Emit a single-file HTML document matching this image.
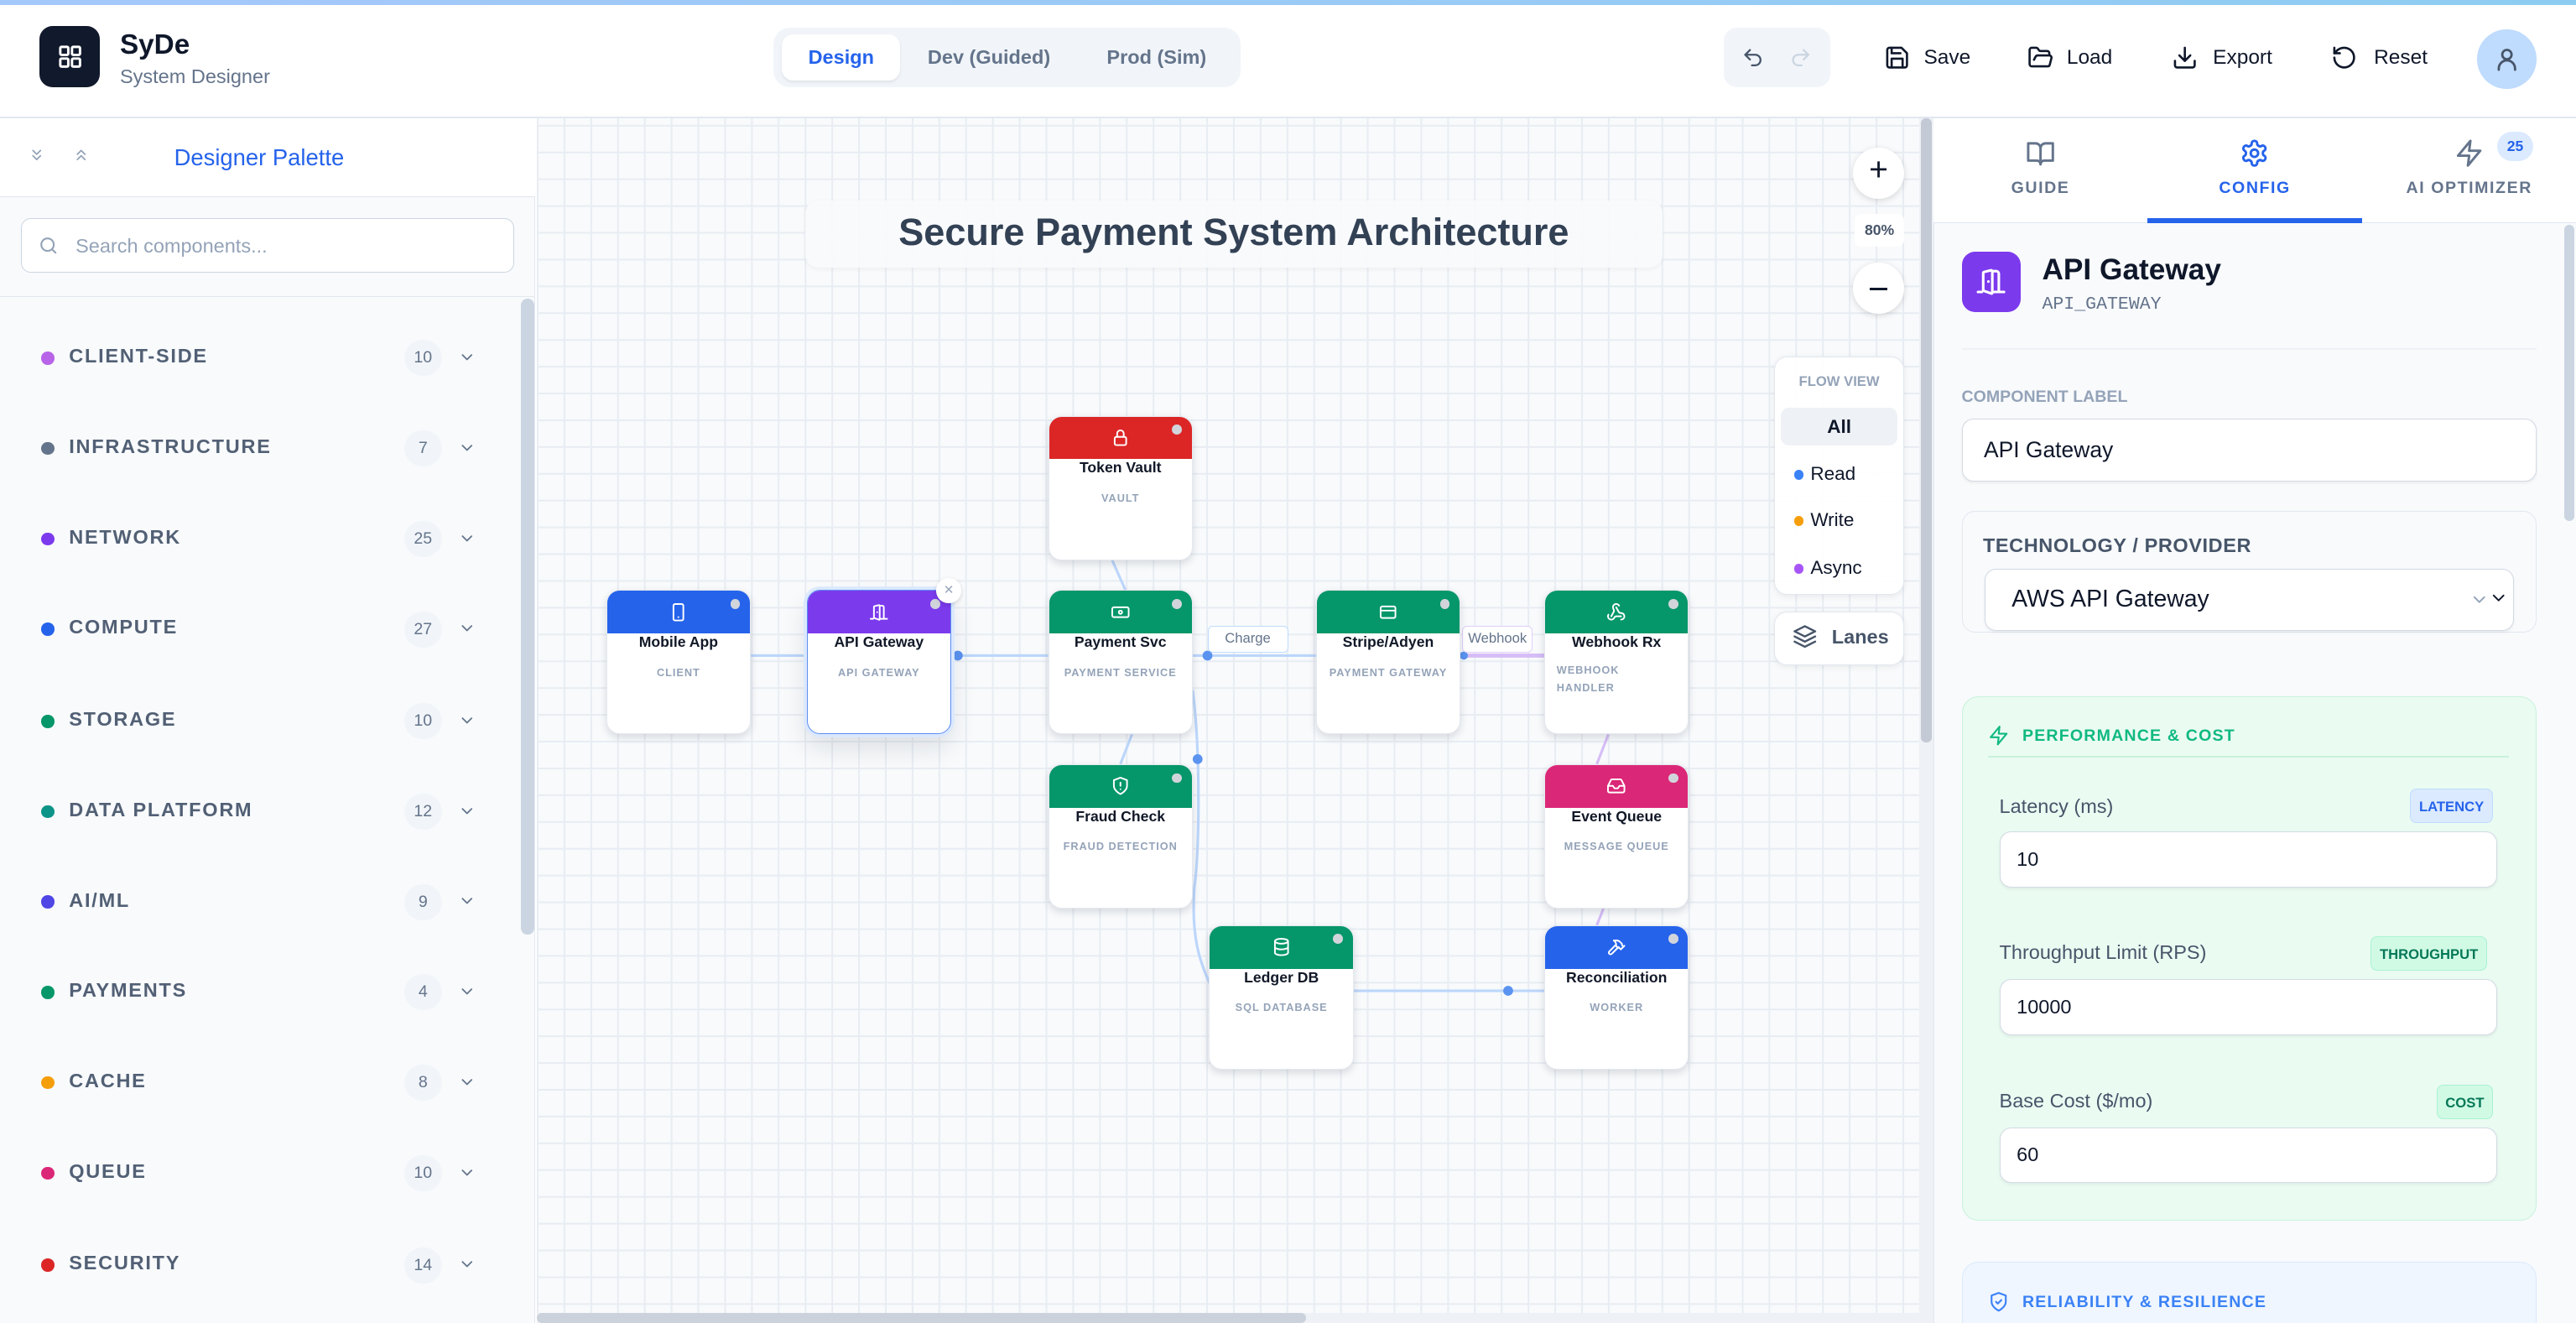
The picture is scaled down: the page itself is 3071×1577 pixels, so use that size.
<!DOCTYPE html>
<html><head><meta charset="utf-8"><style>
*{box-sizing:border-box;margin:0;padding:0}
html,body{width:3071px;height:1576px;overflow:hidden;background:#fff;font-family:"Liberation Sans","DejaVu Sans",sans-serif}
#f{position:absolute;left:0;top:0;width:1568px;height:805px;zoom:1.95855;overflow:hidden;background:#fff}
.a{position:absolute}
.t{position:absolute;white-space:nowrap}
svg.i{fill:none;stroke:currentColor;stroke-width:2;stroke-linecap:round;stroke-linejoin:round}
.cat{position:absolute;left:0;width:316px;height:30px}
.cat .d{position:absolute;left:25px;top:11px;width:8px;height:8px;border-radius:50%}
.cat .l{position:absolute;left:42px;top:7px;font-size:12px;font-weight:bold;color:#526075;letter-spacing:.9px}
.cat .n{position:absolute;left:246px;top:4px;width:23px;height:22px;border-radius:11px;background:#f1f5f9;color:#64748b;font-size:10px;text-align:center;line-height:22px}
.cat svg{position:absolute;left:279px;top:9px;width:11px;height:11px;color:#64748b}
.node{position:absolute;width:88px;height:88px;background:#fff;border-radius:8px;box-shadow:0 2px 5px rgba(15,23,42,.14);border:1px solid #e5e9ef;overflow:hidden}
.node .h{height:26px;display:flex;align-items:center;justify-content:center;color:#fff;position:relative}
.node .h svg{width:12px;height:12px}
.node .h i{position:absolute;right:6px;top:5px;width:6px;height:6px;border-radius:50%;background:#d1d5db}
.node b{display:block;text-align:center;font-size:9px;color:#111827;margin-top:0}
.node s{display:block;text-decoration:none;font-size:6.5px;color:#94a3b8;letter-spacing:.5px;text-align:center;margin-top:9px;font-weight:bold}
.lbl{position:absolute;font-size:10px;color:#94a3b8;font-weight:bold}
.inp{position:absolute;background:#fff;border:1px solid #d3dae3;border-radius:7px;box-shadow:0 1px 2px rgba(0,0,0,.06);font-size:12px;color:#0f172a;padding-left:10px;display:flex;align-items:center}
.badge{position:absolute;font-size:8.5px;font-weight:bold;border-radius:4px;padding:0 5px;height:21px;line-height:21px}
</style></head><body><div id="f">

<div class="a" style="left:0;top:0;width:1568px;height:3px;background:linear-gradient(90deg,#a5c8fa,#8ecdf2)"></div>
<div class="a" style="left:0;top:71px;width:1568px;height:1px;background:#e2e8f0"></div>
<div class="a" style="left:24px;top:16px;width:37px;height:37px;border-radius:8px;background:#111a2c;display:flex;align-items:center;justify-content:center">
<svg class="i" viewBox="0 0 24 24" style="width:18px;height:18px;color:#fff"><rect x="4" y="4" width="6.5" height="6.5" rx="1"/><rect x="13.5" y="4" width="6.5" height="6.5" rx="1"/><rect x="4" y="13.5" width="6.5" height="6.5" rx="1"/><rect x="13.5" y="13.5" width="6.5" height="6.5" rx="1"/></svg></div>
<div class="t" style="left:73px;top:18px;font-size:17px;font-weight:bold;color:#0f172a">SyDe</div>
<div class="t" style="left:73px;top:40px;font-size:12px;color:#64748b">System Designer</div>

<div class="a" style="left:471px;top:17px;width:284px;height:36px;border-radius:10px;background:#f1f5f9"></div>
<div class="a" style="left:476px;top:21px;width:72px;height:28px;border-radius:7px;background:#fff;box-shadow:0 1px 2px rgba(0,0,0,.08)"></div>
<div class="t" style="left:476px;top:28px;width:72px;text-align:center;font-size:12px;font-weight:bold;color:#2563eb">Design</div>
<div class="t" style="left:560px;top:28px;width:84px;text-align:center;font-size:12px;font-weight:bold;color:#64748b">Dev (Guided)</div>
<div class="t" style="left:664px;top:28px;width:80px;text-align:center;font-size:12px;font-weight:bold;color:#64748b">Prod (Sim)</div>

<div class="a" style="left:1049px;top:17px;width:65px;height:36px;border-radius:8px;background:#f1f5f9"></div>
<svg class="i a" viewBox="0 0 24 24" style="left:1060px;top:28px;width:14px;height:14px;color:#475569"><path d="M9 14 4 9l5-5"/><path d="M4 9h10.5a5.5 5.5 0 0 1 5.5 5.5 5.5 5.5 0 0 1-5.5 5.5H11"/></svg>
<svg class="i a" viewBox="0 0 24 24" style="left:1089px;top:28px;width:14px;height:14px;color:#cbd5e1"><path d="m15 14 5-5-5-5"/><path d="M20 9H9.5A5.5 5.5 0 0 0 4 14.5 5.5 5.5 0 0 0 9.5 20H13"/></svg>

<svg class="i a" viewBox="0 0 24 24" style="left:1147px;top:27px;width:16px;height:16px;color:#0f172a"><path d="M19 21H5a2 2 0 0 1-2-2V5a2 2 0 0 1 2-2h11l5 5v11a2 2 0 0 1-2 2z"/><path d="M17 21v-8H7v8M7 3v5h8"/></svg>
<div class="t" style="left:1171px;top:28px;font-size:12.5px;color:#0f172a">Save</div>
<svg class="i a" viewBox="0 0 24 24" style="left:1234px;top:27px;width:16px;height:16px;color:#0f172a"><path d="M6 14l1.5-2.9A2 2 0 0 1 9.24 10H20a2 2 0 0 1 1.94 2.5l-1.54 6a2 2 0 0 1-1.950 1.5H4a2 2 0 0 1-2-2V5a2 2 0 0 1 2-2h3.9a2 2 0 0 1 1.69.9l.81 1.2a2 2 0 0 0 1.67.9H18a2 2 0 0 1 2 2v2"/></svg>
<div class="t" style="left:1258px;top:28px;font-size:12.5px;color:#0f172a">Load</div>
<svg class="i a" viewBox="0 0 24 24" style="left:1322px;top:27px;width:16px;height:16px;color:#0f172a"><path d="M21 15v4a2 2 0 0 1-2 2H5a2 2 0 0 1-2-2v-4"/><path d="M7 10l5 5 5-5M12 15V3"/></svg>
<div class="t" style="left:1347px;top:28px;font-size:12.5px;color:#0f172a">Export</div>
<svg class="i a" viewBox="0 0 24 24" style="left:1419px;top:27px;width:16px;height:16px;color:#0f172a"><path d="M3 12a9 9 0 1 0 9-9 9.75 9.75 0 0 0-6.740 2.74L3 8"/><path d="M3 3v5h5"/></svg>
<div class="t" style="left:1445px;top:28px;font-size:12.5px;color:#0f172a">Reset</div>
<div class="a" style="left:1508px;top:18px;width:36px;height:36px;border-radius:50%;background:#bfdbfe;display:flex;align-items:center;justify-content:center">
<svg class="i" viewBox="0 0 24 24" style="width:17px;height:17px;color:#475569"><circle cx="12" cy="8" r="4"/><path d="M5 21v-1a7 7 0 0 1 14 0v1"/></svg></div>

<div class="a" style="left:0;top:72px;width:326px;height:733px;background:#f8fafc;border-right:1px solid #e2e8f0"></div>
<div class="a" style="left:0;top:72px;width:326px;height:48px;background:#fff;border-bottom:1px solid #e2e8f0"></div>
<svg class="i a" viewBox="0 0 24 24" style="left:17px;top:89px;width:11px;height:11px;color:#94a3b8"><path d="m7 6 5 5 5-5M7 13l5 5 5-5"/></svg>
<svg class="i a" viewBox="0 0 24 24" style="left:44px;top:89px;width:11px;height:11px;color:#94a3b8"><path d="m17 11-5-5-5 5M17 18l-5-5-5 5"/></svg>
<div class="t" style="left:106px;top:88px;font-size:14px;color:#2563eb">Designer Palette</div>
<div class="a" style="left:13px;top:133px;width:300px;height:33px;background:#fff;border:1px solid #cbd5e1;border-radius:6px"></div>
<svg class="i a" viewBox="0 0 24 24" style="left:23px;top:143px;width:13px;height:13px;color:#94a3b8"><circle cx="11" cy="11" r="7"/><path d="m20 20-4-4"/></svg>
<div class="t" style="left:46px;top:143px;font-size:12px;color:#94a3b8">Search components...</div>
<div class="a" style="left:0;top:180px;width:326px;height:1px;background:#e2e8f0"></div>
<div class="a" style="left:317px;top:182px;width:8px;height:387px;border-radius:4px;background:#cbd5e1"></div>

<div class="cat" style="top:203px"><i class="d" style="background:#b764e8"></i><span class="l">CLIENT-SIDE</span><span class="n">10</span><svg class="i" viewBox="0 0 24 24"><path d="m6 9 6 6 6-6"/></svg></div>
<div class="cat" style="top:258px"><i class="d" style="background:#64748b"></i><span class="l">INFRASTRUCTURE</span><span class="n">7</span><svg class="i" viewBox="0 0 24 24"><path d="m6 9 6 6 6-6"/></svg></div>
<div class="cat" style="top:313px"><i class="d" style="background:#7c3aed"></i><span class="l">NETWORK</span><span class="n">25</span><svg class="i" viewBox="0 0 24 24"><path d="m6 9 6 6 6-6"/></svg></div>
<div class="cat" style="top:368px"><i class="d" style="background:#2563eb"></i><span class="l">COMPUTE</span><span class="n">27</span><svg class="i" viewBox="0 0 24 24"><path d="m6 9 6 6 6-6"/></svg></div>
<div class="cat" style="top:424px"><i class="d" style="background:#059669"></i><span class="l">STORAGE</span><span class="n">10</span><svg class="i" viewBox="0 0 24 24"><path d="m6 9 6 6 6-6"/></svg></div>
<div class="cat" style="top:479px"><i class="d" style="background:#0d9488"></i><span class="l">DATA PLATFORM</span><span class="n">12</span><svg class="i" viewBox="0 0 24 24"><path d="m6 9 6 6 6-6"/></svg></div>
<div class="cat" style="top:534px"><i class="d" style="background:#4f46e5"></i><span class="l">AI/ML</span><span class="n">9</span><svg class="i" viewBox="0 0 24 24"><path d="m6 9 6 6 6-6"/></svg></div>
<div class="cat" style="top:589px"><i class="d" style="background:#059669"></i><span class="l">PAYMENTS</span><span class="n">4</span><svg class="i" viewBox="0 0 24 24"><path d="m6 9 6 6 6-6"/></svg></div>
<div class="cat" style="top:644px"><i class="d" style="background:#f59e0b"></i><span class="l">CACHE</span><span class="n">8</span><svg class="i" viewBox="0 0 24 24"><path d="m6 9 6 6 6-6"/></svg></div>
<div class="cat" style="top:699px"><i class="d" style="background:#db2777"></i><span class="l">QUEUE</span><span class="n">10</span><svg class="i" viewBox="0 0 24 24"><path d="m6 9 6 6 6-6"/></svg></div>
<div class="cat" style="top:755px"><i class="d" style="background:#dc2626"></i><span class="l">SECURITY</span><span class="n">14</span><svg class="i" viewBox="0 0 24 24"><path d="m6 9 6 6 6-6"/></svg></div>

<div class="a" style="left:327px;top:72px;width:841px;height:733px;background-color:#f8fafc;background-image:linear-gradient(#e8edf3 1px,transparent 1px),linear-gradient(90deg,#e8edf3 1px,transparent 1px);background-size:16.3px 16.3px;background-position:0 4px"></div>
<div class="a" style="left:1168px;top:72px;width:9px;height:733px;background:#eef1f5"></div>
<div class="a" style="left:1169px;top:72px;width:7px;height:380px;background:#c3cad5;border-radius:3px"></div>
<div class="a" style="left:327px;top:799px;width:841px;height:6px;background:#eef1f5"></div>
<div class="a" style="left:327px;top:799px;width:468px;height:6px;background:#cbd2dc;border-radius:3px"></div>

<div class="a" style="left:490px;top:122px;width:522px;height:41px;border-radius:8px;background:rgba(248,250,252,.9);box-shadow:0 1px 3px rgba(0,0,0,.05)"></div>
<div class="t" style="left:490px;top:128px;width:522px;text-align:center;font-size:23px;font-weight:bold;color:#334155">Secure Payment System Architecture</div>

<svg class="a" style="left:0;top:0" width="1568" height="805" fill="none" stroke-width="1.6">
<g stroke="#bcd6fb">
<path d="M457 399H491"/><path d="M579 399H638"/><path d="M726 399H801"/>
<path d="M677 341L685 359"/><path d="M689 447L682 465"/>
<path d="M726 420C731 460 730 520 727 540C725 570 730 585 737 600"/>
<path d="M824 603H940"/>
</g>
<g stroke="#d6bdf7"><path d="M889 399H940" stroke-width="2.5"/><path d="M979 447L972 465"/><path d="M976 553L972 563"/></g>
<g fill="#5b93f0" stroke="none"><circle cx="583" cy="399" r="3"/><circle cx="735" cy="399" r="3"/><circle cx="729" cy="462" r="3"/><circle cx="918" cy="603" r="3"/><circle cx="891" cy="399" r="2.5"/></g>
</svg>
<div class="a" style="left:735px;top:381px;width:49px;height:16px;background:#fff;border:1px solid #bfdbfe;border-radius:3px;font-size:8.5px;color:#64748b;text-align:center;line-height:14px">Charge</div>
<div class="a" style="left:890px;top:381px;width:43px;height:16px;background:#fff;border:1px solid #e0cffa;border-radius:3px;font-size:8.5px;color:#64748b;text-align:center;line-height:14px">Webhook</div>

<div class="node" style="left:369px;top:359px"><div class="h" style="background:#2563eb"><svg class="i" viewBox="0 0 24 24"><rect x="6" y="2" width="12" height="20" rx="2"/><path d="M12 18h.01"/></svg><i></i></div><b>Mobile App</b><s>CLIENT</s></div>
<div class="node" style="left:491px;top:359px;border:1px solid #5b8def;box-shadow:0 0 0 2px #dbe8fd,0 8px 16px rgba(15,23,42,.12)"><div class="h" style="background:#7c3aed"><svg class="i" viewBox="0 0 24 24"><path d="M13 4h3a2 2 0 0 1 2 2v14M2 20h3M13 20h9M10 12v.01M13 4.56v16.16a.5.5 0 0 1-.65.47L6 19V5.6a1 1 0 0 1 .76-.97l5-1.25a1 1 0 0 1 1.24.97Z"/></svg><i></i></div><b>API Gateway</b><s>API GATEWAY</s></div>
<div class="a" style="left:570px;top:352px;width:15px;height:15px;border-radius:50%;background:#fff;box-shadow:0 1px 3px rgba(0,0,0,.15);font-size:10px;color:#94a3b8;text-align:center;line-height:15px">×</div>
<div class="node" style="left:638px;top:253px"><div class="h" style="background:#dc2626"><svg class="i" viewBox="0 0 24 24"><rect x="5" y="11" width="14" height="10" rx="2"/><path d="M8 11V7a4 4 0 0 1 8 0v4"/></svg><i></i></div><b>Token Vault</b><s>VAULT</s></div>
<div class="node" style="left:638px;top:359px"><div class="h" style="background:#059669"><svg class="i" viewBox="0 0 24 24"><rect x="2" y="6" width="20" height="12" rx="2"/><circle cx="12" cy="12" r="2"/></svg><i></i></div><b>Payment Svc</b><s>PAYMENT SERVICE</s></div>
<div class="node" style="left:638px;top:465px"><div class="h" style="background:#059669"><svg class="i" viewBox="0 0 24 24"><path d="M12 22s8-4 8-10V5l-8-3-8 3v7c0 6 8 10 8 10zM12 8v4M12 16h.01"/></svg><i></i></div><b>Fraud Check</b><s>FRAUD DETECTION</s></div>
<div class="node" style="left:801px;top:359px"><div class="h" style="background:#059669"><svg class="i" viewBox="0 0 24 24"><rect x="3" y="5" width="18" height="14" rx="2"/><path d="M3 10h18"/></svg><i></i></div><b>Stripe/Adyen</b><s>PAYMENT GATEWAY</s></div>
<div class="node" style="left:940px;top:359px"><div class="h" style="background:#059669"><svg class="i" viewBox="0 0 24 24"><path d="M18 16.98h-5.99c-1.1 0-1.95.94-2.48 1.9A4 4 0 0 1 2 17c.01-.7.2-1.4.57-2"/><path d="m6 17 3.13-5.78c.53-.97.1-2.18-.5-3.1a4 4 0 1 1 6.89-4.06"/><path d="m12 6 3.13 5.73C15.66 12.7 16.9 13 18 13a4 4 0 0 1 0 8"/></svg><i></i></div><b>Webhook Rx</b><s style="text-align:left;padding-left:7px;line-height:11px;margin-top:6px">WEBHOOK<br>HANDLER</s></div>
<div class="node" style="left:940px;top:465px"><div class="h" style="background:#db2777"><svg class="i" viewBox="0 0 24 24"><path d="M22 12h-6l-2 3h-4l-2-3H2"/><path d="M5.45 5.11 2 12v6a2 2 0 0 0 2 2h16a2 2 0 0 0 2-2v-6l-3.45-6.89A2 2 0 0 0 16.760 4H7.24a2 2 0 0 0-1.79 1.11z"/></svg><i></i></div><b>Event Queue</b><s>MESSAGE QUEUE</s></div>
<div class="node" style="left:736px;top:563px"><div class="h" style="background:#059669"><svg class="i" viewBox="0 0 24 24"><ellipse cx="12" cy="5" rx="8" ry="3"/><path d="M4 5v14c0 1.7 3.6 3 8 3s8-1.3 8-3V5M4 12c0 1.7 3.6 3 8 3s8-1.3 8-3"/></svg><i></i></div><b>Ledger DB</b><s>SQL DATABASE</s></div>
<div class="node" style="left:940px;top:563px"><div class="h" style="background:#2563eb"><svg class="i" viewBox="0 0 24 24"><path d="m15 12-8.4 8.4a2.1 2.1 0 0 1-3-3L12 9M17.6 15 22 10.6M20.9 11.7l-1.3-1.3a2 2 0 0 1-.6-1.4v-.9l-2.3-2.2a6 6 0 0 0-4.2-1.8H9l.9.8a6.2 6.2 0 0 1 2.1 4.7V11l2 2h.9a2 2 0 0 1 1.4.6l1.3 1.3"/></svg><i></i></div><b>Reconciliation</b><s>WORKER</s></div>

<div class="a" style="left:1128px;top:90px;width:31px;height:31px;border-radius:50%;background:#fff;box-shadow:0 1px 4px rgba(0,0,0,.15);text-align:center;line-height:28px;font-size:20px;color:#0f172a">+</div>
<div class="a" style="left:1129px;top:130px;width:30px;height:20px;border-radius:4px;background:rgba(255,255,255,.9);font-size:9px;font-weight:bold;color:#475569;text-align:center;line-height:20px">80%</div>
<div class="a" style="left:1128px;top:160px;width:31px;height:31px;border-radius:50%;background:#fff;box-shadow:0 1px 4px rgba(0,0,0,.15)"><div class="a" style="left:10px;top:15px;width:11px;height:1.5px;background:#0f172a"></div></div>

<div class="a" style="left:1080px;top:217px;width:79px;height:145px;border-radius:8px;background:rgba(255,255,255,.95);border:1px solid #e2e8f0;box-shadow:0 1px 4px rgba(0,0,0,.08)"></div>
<div class="t" style="left:1080px;top:227px;width:79px;text-align:center;font-size:8.5px;font-weight:bold;color:#94a3b8">FLOW VIEW</div>
<div class="a" style="left:1084px;top:248px;width:71px;height:23px;border-radius:5px;background:#eef1f5;text-align:center;line-height:23px;font-size:11.5px;font-weight:bold;color:#0f172a">All</div>
<div class="a" style="left:1092px;top:286px;width:6px;height:6px;border-radius:50%;background:#3b82f6"></div><div class="t" style="left:1102px;top:282px;font-size:11.5px;color:#0f172a">Read</div>
<div class="a" style="left:1092px;top:314px;width:6px;height:6px;border-radius:50%;background:#f59e0b"></div><div class="t" style="left:1102px;top:310px;font-size:11.5px;color:#0f172a">Write</div>
<div class="a" style="left:1092px;top:343px;width:6px;height:6px;border-radius:50%;background:#a855f7"></div><div class="t" style="left:1102px;top:339px;font-size:11.5px;color:#0f172a">Async</div>
<div class="a" style="left:1080px;top:372px;width:79px;height:33px;border-radius:8px;background:#fff;border:1px solid #e2e8f0;box-shadow:0 1px 4px rgba(0,0,0,.08)"></div>
<svg class="i a" viewBox="0 0 24 24" style="left:1091px;top:380px;width:15px;height:15px;color:#475569"><path d="m12 2 10 5-10 5L2 7z"/><path d="m2 12 10 5 10-5M2 17l10 5 10-5"/></svg>
<div class="t" style="left:1115px;top:381px;font-size:12px;font-weight:bold;color:#475569">Lanes</div>

<div class="a" style="left:1177px;top:72px;width:391px;height:733px;background:#f8fafc;border-left:1px solid #e2e8f0"></div>
<div class="a" style="left:1177px;top:72px;width:391px;height:64px;background:#fff;border-bottom:1px solid #e2e8f0"></div>
<svg class="i a" viewBox="0 0 24 24" style="left:1233px;top:84px;width:18px;height:18px;color:#64748b"><path d="M2 4h6a4 4 0 0 1 4 4v13a3 3 0 0 0-3-3H2zM22 4h-6a4 4 0 0 0-4 4v13a3 3 0 0 1 3-3h7z"/></svg>
<div class="t" style="left:1177px;top:109px;width:130px;text-align:center;font-size:10px;font-weight:bold;color:#64748b;letter-spacing:.8px">GUIDE</div>
<svg class="i a" viewBox="0 0 24 24" style="left:1363px;top:84px;width:18px;height:18px;color:#2563eb"><path d="M12.22 2h-.44a2 2 0 0 0-2 2v.18a2 2 0 0 1-1 1.73l-.43.25a2 2 0 0 1-2 0l-.15-.08a2 2 0 0 0-2.73.73l-.22.38a2 2 0 0 0 .73 2.73l.15.1a2 2 0 0 1 1 1.72v.51a2 2 0 0 1-1 1.74l-.15.09a2 2 0 0 0-.73 2.730l.22.38a2 2 0 0 0 2.73.73l.15-.08a2 2 0 0 1 2 0l.43.25a2 2 0 0 1 1 1.73V20a2 2 0 0 0 2 2h.44a2 2 0 0 0 2-2v-.18a2 2 0 0 1 1-1.73l.43-.25a2 2 0 0 1 2 0l.15.08a2 2 0 0 0 2.73-.73l.22-.39a2 2 0 0 0-.73-2.73l-.15-.08a2 2 0 0 1-1-1.74v-.5a2 2 0 0 1 1-1.74l.15-.09a2 2 0 0 0 .73-2.73l-.22-.38a2 2 0 0 0-2.73-.73l-.15.08a2 2 0 0 1-2 0l-.43-.25a2 2 0 0 1-1-1.73V4a2 2 0 0 0-2-2z"/><circle cx="12" cy="12" r="3"/></svg>
<div class="t" style="left:1307px;top:109px;width:131px;text-align:center;font-size:10px;font-weight:bold;color:#2563eb;letter-spacing:.8px">CONFIG</div>
<div class="a" style="left:1307px;top:133px;width:131px;height:3px;background:#2563eb"></div>
<svg class="i a" viewBox="0 0 24 24" style="left:1494px;top:84px;width:18px;height:18px;color:#64748b"><path d="M13 2 3 14h9l-1 8 10-12h-9z"/></svg>
<div class="a" style="left:1520px;top:80px;width:22px;height:18px;border-radius:9px;background:#dbeafe;font-size:9px;font-weight:bold;color:#2563eb;text-align:center;line-height:18px">25</div>
<div class="t" style="left:1438px;top:109px;width:130px;text-align:center;font-size:10px;font-weight:bold;color:#64748b;letter-spacing:.8px">AI OPTIMIZER</div>
<div class="a" style="left:1561px;top:137px;width:6px;height:180px;border-radius:3px;background:#cbd5e1"></div>

<div class="a" style="left:1194px;top:153px;width:36px;height:37px;border-radius:8px;background:#7c3aed;display:flex;align-items:center;justify-content:center"><svg class="i" viewBox="0 0 24 24" style="width:19px;height:19px;color:#fff"><path d="M13 4h3a2 2 0 0 1 2 2v14M2 20h3M13 20h9M10 12v.01M13 4.56v16.16a.5.5 0 0 1-.65.47L6 19V5.6a1 1 0 0 1 .76-.97l5-1.25a1 1 0 0 1 1.24.97Z"/></svg></div>
<div class="t" style="left:1243px;top:154px;font-size:18px;font-weight:bold;color:#0f172a">API Gateway</div>
<div class="t" style="left:1243px;top:179px;font-family:'Liberation Mono',monospace;font-size:11px;color:#64748b">API_GATEWAY</div>
<div class="a" style="left:1194px;top:212px;width:350px;height:1px;background:#eef1f5"></div>
<div class="lbl" style="left:1194px;top:236px">COMPONENT LABEL</div>
<div class="inp" style="left:1194px;top:255px;width:350px;height:38px;font-size:13.5px;padding-left:13px">API Gateway</div>
<div class="a" style="left:1194px;top:311px;width:350px;height:74px;border:1px solid #e2e8f0;border-radius:8px;background:#f8fafc"></div>
<div class="t" style="left:1207px;top:325px;font-size:12px;font-weight:bold;color:#475569;letter-spacing:.3px">TECHNOLOGY / PROVIDER</div>
<div class="inp" style="left:1208px;top:346px;width:322px;height:38px;font-size:14.5px;padding-left:16px">AWS API Gateway</div>
<svg class="i a" viewBox="0 0 24 24" style="left:1503px;top:359px;width:12px;height:12px;color:#94a3b8"><path d="m6 9 6 6 6-6"/></svg>
<svg class="i a" viewBox="0 0 24 24" style="left:1515px;top:358px;width:12px;height:12px;color:#0f172a"><path d="m6 9 6 6 6-6"/></svg>

<div class="a" style="left:1194px;top:424px;width:350px;height:319px;border:1px solid #c8f2db;border-radius:10px;background:#eafbf2"></div>
<svg class="i a" viewBox="0 0 24 24" style="left:1210px;top:441px;width:13px;height:13px;color:#10b981"><path d="M13 2 3 14h9l-1 8 10-12h-9z"/></svg>
<div class="t" style="left:1231px;top:442px;font-size:10px;font-weight:bold;color:#10b981;letter-spacing:.6px">PERFORMANCE &amp; COST</div>
<div class="a" style="left:1210px;top:460px;width:317px;height:1px;background:#c8f2db"></div>
<div class="t" style="left:1217px;top:484px;font-size:12px;color:#475569">Latency (ms)</div>
<div class="badge" style="left:1467px;top:480px;background:#dbeafe;color:#2563eb;border:1px solid #bfdbfe">LATENCY</div>
<div class="inp" style="left:1217px;top:506px;width:303px;height:34px">10</div>
<div class="t" style="left:1217px;top:573px;font-size:12px;color:#475569">Throughput Limit (RPS)</div>
<div class="badge" style="left:1443px;top:570px;background:#d1fae5;color:#047857;border:1px solid #a7f3d0">THROUGHPUT</div>
<div class="inp" style="left:1217px;top:596px;width:303px;height:34px">10000</div>
<div class="t" style="left:1217px;top:663px;font-size:12px;color:#475569">Base Cost ($/mo)</div>
<div class="badge" style="left:1483px;top:660px;background:#d1fae5;color:#047857;border:1px solid #a7f3d0">COST</div>
<div class="inp" style="left:1217px;top:686px;width:303px;height:34px">60</div>

<div class="a" style="left:1194px;top:768px;width:350px;height:60px;border:1px solid #dbeafe;border-radius:10px;background:#eff6ff"></div>
<svg class="i a" viewBox="0 0 24 24" style="left:1210px;top:786px;width:13px;height:13px;color:#3b82f6"><path d="M12 22s8-4 8-10V5l-8-3-8 3v7c0 6 8 10 8 10z"/><path d="m9 12 2 2 4-4"/></svg>
<div class="t" style="left:1231px;top:787px;font-size:10px;font-weight:bold;color:#3b82f6;letter-spacing:.6px">RELIABILITY &amp; RESILIENCE</div>

</div></body></html>
